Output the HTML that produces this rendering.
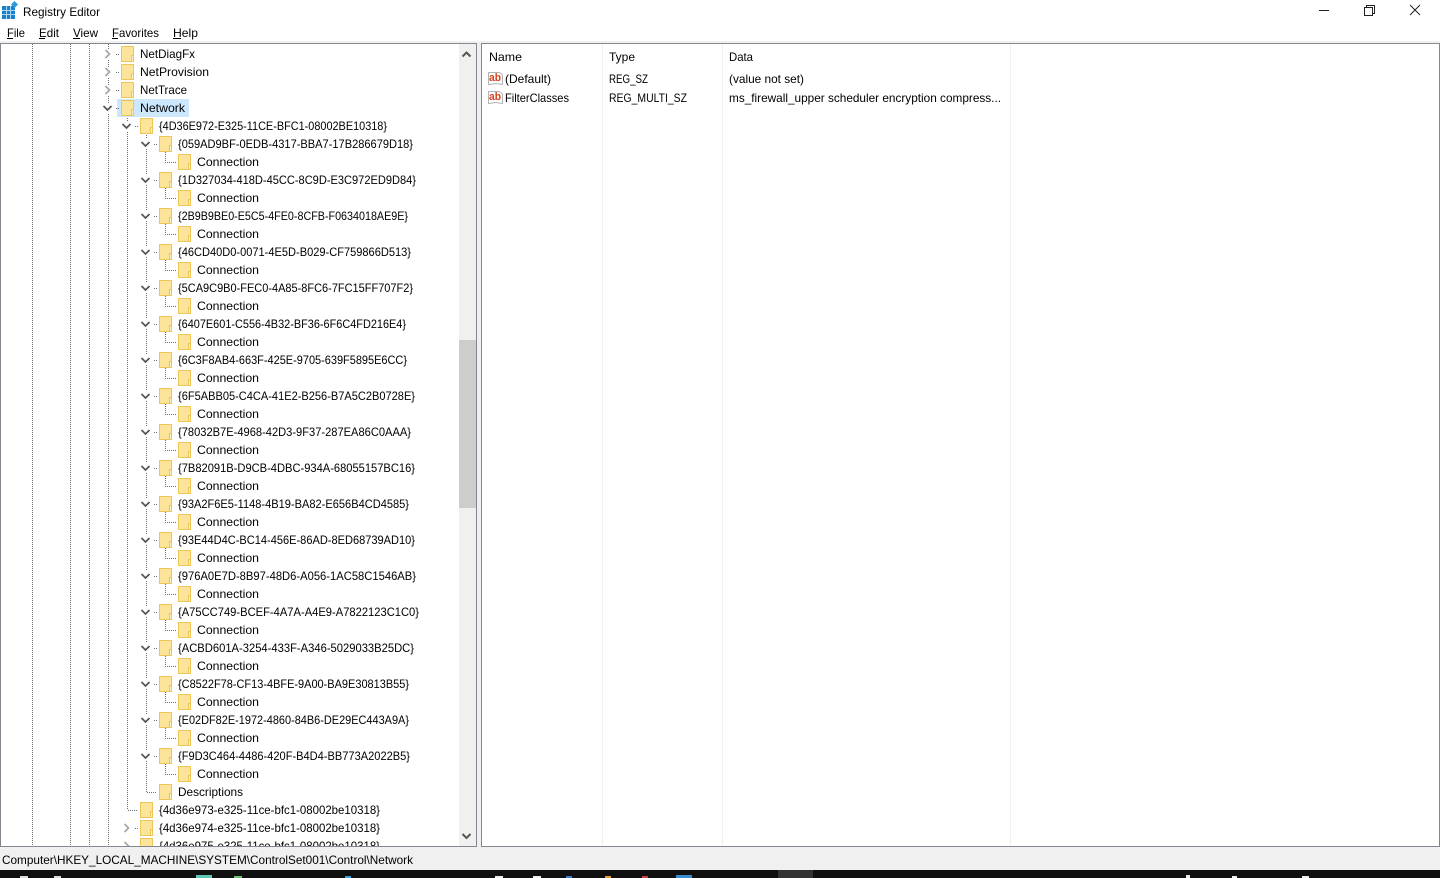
<!DOCTYPE html>
<html><head><meta charset="utf-8"><title>Registry Editor</title>
<style>
html,body{margin:0;padding:0;background:#fff;overflow:hidden}
svg{display:block}
text{font-family:"Liberation Sans",sans-serif;font-size:12px;fill:#000}
.d{stroke:#6e6e6e;stroke-width:1;stroke-dasharray:1 1;fill:none}
</style></head><body>
<svg xmlns="http://www.w3.org/2000/svg" width="1440" height="878" viewBox="0 0 1440 878">
<defs>
<g id="f"><path d="M.5-7.5H12.5V7.5H.5Z" fill="#fce49a" stroke="#eec558"/><path d="M10.500 1.500V7.500H12.500V1.500Z" fill="#fdf1c4" stroke="#eec558"/></g>
<g id="cd"><rect x="-4.500" y="-5" width="10" height="10" fill="#fff"/><path d="M-3.500-2 .5 2 4.500-2" fill="none" stroke="#555" stroke-width="1.7"/></g>
<g id="cr"><rect x="-4.500" y="-5" width="10" height="10" fill="#fff"/><path d="M-1.500-4 2.500 0-1.500 4" fill="none" stroke="#a6a6a6" stroke-width="1.7"/></g>
<path id="s" d="M0 0H1M2 0H3" stroke="#6e6e6e" fill="none"/>
<clipPath id="tree"><rect x="1" y="44" width="458" height="802"/></clipPath>
</defs>

<rect width="1440" height="878" fill="#fff"/>
<!-- title bar -->
<g>
<path d="M2 6H15V19H2Z" fill="#1a80c8"/>
<path d="M2 10.500H15M2 14.500H15M6.500 6V19M10.500 6V19" stroke="#a8d8f4" stroke-width="1" shape-rendering="crispEdges"/>
<path d="M14.500 1 18 4.500 14.500 8 11 4.500Z" fill="#2a9ad8"/>
</g>
<text x="23" y="16" textLength="77" lengthAdjust="spacingAndGlyphs">Registry Editor</text>
<path d="M1319 10.500H1329" stroke="#222" fill="none" shape-rendering="crispEdges"/>
<path d="M1364.500 7.500H1372.500V15.500H1364.500ZM1366.500 7.500V5.500H1374.500V13.500H1372.500" stroke="#222" fill="none" shape-rendering="crispEdges"/>
<path d="M1410 5 1420 15M1420 5 1410 15" stroke="#222" fill="none"/>
<!-- menu -->
<text x="7" y="37" textLength="18" lengthAdjust="spacingAndGlyphs">File</text>
<text x="39" y="37" textLength="20" lengthAdjust="spacingAndGlyphs">Edit</text>
<text x="73" y="37" textLength="25" lengthAdjust="spacingAndGlyphs">View</text>
<text x="112" y="37" textLength="47" lengthAdjust="spacingAndGlyphs">Favorites</text>
<text x="173" y="37" textLength="25" lengthAdjust="spacingAndGlyphs">Help</text>
<path d="M7 38.500H13M39 38.500H45M73 38.500H80M112 38.500H118M173 38.500H181" stroke="#000" shape-rendering="crispEdges"/>
<rect x="0" y="41" width="1440" height="2" fill="#f0f0f0"/>

<!-- panes frame -->
<rect x="477" y="43" width="4" height="805" fill="#f0f0f0"/>
<rect x="0" y="847" width="1440" height="23" fill="#f0f0f0"/>
<rect x="0" y="870" width="1440" height="8" fill="#101010"/>
<rect x=".5" y="43.500" width="476" height="803" fill="none" stroke="#828790" shape-rendering="crispEdges"/>
<rect x="481.500" y="43.500" width="958" height="803" fill="none" stroke="#828790" shape-rendering="crispEdges"/>

<!-- tree -->
<g clip-path="url(#tree)">
<path class="d" d="M32.500 44V846M70.500 44V846M89.500 44V846M108.500 44V846M127.500 116V810M146.500 135V792"/>
<path class="d" d="M128 810.500H138M147 792.500H157"/>
<rect x="117" y="99" width="72" height="18" fill="#cce8ff"/>

<use href="#cr" x="107" y="54"/><use href="#s" x="116" y="54.500"/><use href="#f" x="121" y="54"/><text x="140" y="58" textLength="55" lengthAdjust="spacingAndGlyphs">NetDiagFx</text>
<use href="#cr" x="107" y="72"/><use href="#s" x="116" y="72.500"/><use href="#f" x="121" y="72"/><text x="140" y="76" textLength="69" lengthAdjust="spacingAndGlyphs">NetProvision</text>
<use href="#cr" x="107" y="90"/><use href="#s" x="116" y="90.500"/><use href="#f" x="121" y="90"/><text x="140" y="94" textLength="47" lengthAdjust="spacingAndGlyphs">NetTrace</text>
<use href="#cd" x="107" y="108"/><use href="#s" x="116" y="108.500"/><use href="#f" x="121" y="108"/><text x="140" y="112" textLength="45" lengthAdjust="spacingAndGlyphs">Network</text>
<use href="#cd" x="126" y="126"/><use href="#s" x="135" y="126.500"/><use href="#f" x="140" y="126"/><text x="159" y="130" textLength="228" lengthAdjust="spacingAndGlyphs">{4D36E972-E325-11CE-BFC1-08002BE10318}</text>

<g transform="translate(0,144)"><use href="#cd" x="145"/><use href="#s" x="154" y=".5"/><use href="#f" x="159"/><text x="178" y="4" textLength="235" lengthAdjust="spacingAndGlyphs">{059AD9BF-0EDB-4317-BBA7-17B286679D18}</text><path class="d" d="M165.500 8V18.500H176"/><use href="#f" x="178" y="18"/><text x="197" y="22" textLength="62" lengthAdjust="spacingAndGlyphs">Connection</text></g>
<g transform="translate(0,180)"><use href="#cd" x="145"/><use href="#s" x="154" y=".5"/><use href="#f" x="159"/><text x="178" y="4" textLength="238" lengthAdjust="spacingAndGlyphs">{1D327034-418D-45CC-8C9D-E3C972ED9D84}</text><path class="d" d="M165.500 8V18.500H176"/><use href="#f" x="178" y="18"/><text x="197" y="22" textLength="62" lengthAdjust="spacingAndGlyphs">Connection</text></g>
<g transform="translate(0,216)"><use href="#cd" x="145"/><use href="#s" x="154" y=".5"/><use href="#f" x="159"/><text x="178" y="4" textLength="230" lengthAdjust="spacingAndGlyphs">{2B9B9BE0-E5C5-4FE0-8CFB-F0634018AE9E}</text><path class="d" d="M165.500 8V18.500H176"/><use href="#f" x="178" y="18"/><text x="197" y="22" textLength="62" lengthAdjust="spacingAndGlyphs">Connection</text></g>
<g transform="translate(0,252)"><use href="#cd" x="145"/><use href="#s" x="154" y=".5"/><use href="#f" x="159"/><text x="178" y="4" textLength="233" lengthAdjust="spacingAndGlyphs">{46CD40D0-0071-4E5D-B029-CF759866D513}</text><path class="d" d="M165.500 8V18.500H176"/><use href="#f" x="178" y="18"/><text x="197" y="22" textLength="62" lengthAdjust="spacingAndGlyphs">Connection</text></g>
<g transform="translate(0,288)"><use href="#cd" x="145"/><use href="#s" x="154" y=".5"/><use href="#f" x="159"/><text x="178" y="4" textLength="235" lengthAdjust="spacingAndGlyphs">{5CA9C9B0-FEC0-4A85-8FC6-7FC15FF707F2}</text><path class="d" d="M165.500 8V18.500H176"/><use href="#f" x="178" y="18"/><text x="197" y="22" textLength="62" lengthAdjust="spacingAndGlyphs">Connection</text></g>
<g transform="translate(0,324)"><use href="#cd" x="145"/><use href="#s" x="154" y=".5"/><use href="#f" x="159"/><text x="178" y="4" textLength="228" lengthAdjust="spacingAndGlyphs">{6407E601-C556-4B32-BF36-6F6C4FD216E4}</text><path class="d" d="M165.500 8V18.500H176"/><use href="#f" x="178" y="18"/><text x="197" y="22" textLength="62" lengthAdjust="spacingAndGlyphs">Connection</text></g>
<g transform="translate(0,360)"><use href="#cd" x="145"/><use href="#s" x="154" y=".5"/><use href="#f" x="159"/><text x="178" y="4" textLength="229" lengthAdjust="spacingAndGlyphs">{6C3F8AB4-663F-425E-9705-639F5895E6CC}</text><path class="d" d="M165.500 8V18.500H176"/><use href="#f" x="178" y="18"/><text x="197" y="22" textLength="62" lengthAdjust="spacingAndGlyphs">Connection</text></g>
<g transform="translate(0,396)"><use href="#cd" x="145"/><use href="#s" x="154" y=".5"/><use href="#f" x="159"/><text x="178" y="4" textLength="237" lengthAdjust="spacingAndGlyphs">{6F5ABB05-C4CA-41E2-B256-B7A5C2B0728E}</text><path class="d" d="M165.500 8V18.500H176"/><use href="#f" x="178" y="18"/><text x="197" y="22" textLength="62" lengthAdjust="spacingAndGlyphs">Connection</text></g>
<g transform="translate(0,432)"><use href="#cd" x="145"/><use href="#s" x="154" y=".5"/><use href="#f" x="159"/><text x="178" y="4" textLength="233" lengthAdjust="spacingAndGlyphs">{78032B7E-4968-42D3-9F37-287EA86C0AAA}</text><path class="d" d="M165.500 8V18.500H176"/><use href="#f" x="178" y="18"/><text x="197" y="22" textLength="62" lengthAdjust="spacingAndGlyphs">Connection</text></g>
<g transform="translate(0,468)"><use href="#cd" x="145"/><use href="#s" x="154" y=".5"/><use href="#f" x="159"/><text x="178" y="4" textLength="237" lengthAdjust="spacingAndGlyphs">{7B82091B-D9CB-4DBC-934A-68055157BC16}</text><path class="d" d="M165.500 8V18.500H176"/><use href="#f" x="178" y="18"/><text x="197" y="22" textLength="62" lengthAdjust="spacingAndGlyphs">Connection</text></g>
<g transform="translate(0,504)"><use href="#cd" x="145"/><use href="#s" x="154" y=".5"/><use href="#f" x="159"/><text x="178" y="4" textLength="231" lengthAdjust="spacingAndGlyphs">{93A2F6E5-1148-4B19-BA82-E656B4CD4585}</text><path class="d" d="M165.500 8V18.500H176"/><use href="#f" x="178" y="18"/><text x="197" y="22" textLength="62" lengthAdjust="spacingAndGlyphs">Connection</text></g>
<g transform="translate(0,540)"><use href="#cd" x="145"/><use href="#s" x="154" y=".5"/><use href="#f" x="159"/><text x="178" y="4" textLength="237" lengthAdjust="spacingAndGlyphs">{93E44D4C-BC14-456E-86AD-8ED68739AD10}</text><path class="d" d="M165.500 8V18.500H176"/><use href="#f" x="178" y="18"/><text x="197" y="22" textLength="62" lengthAdjust="spacingAndGlyphs">Connection</text></g>
<g transform="translate(0,576)"><use href="#cd" x="145"/><use href="#s" x="154" y=".5"/><use href="#f" x="159"/><text x="178" y="4" textLength="238" lengthAdjust="spacingAndGlyphs">{976A0E7D-8B97-48D6-A056-1AC58C1546AB}</text><path class="d" d="M165.500 8V18.500H176"/><use href="#f" x="178" y="18"/><text x="197" y="22" textLength="62" lengthAdjust="spacingAndGlyphs">Connection</text></g>
<g transform="translate(0,612)"><use href="#cd" x="145"/><use href="#s" x="154" y=".5"/><use href="#f" x="159"/><text x="178" y="4" textLength="241" lengthAdjust="spacingAndGlyphs">{A75CC749-BCEF-4A7A-A4E9-A7822123C1C0}</text><path class="d" d="M165.500 8V18.500H176"/><use href="#f" x="178" y="18"/><text x="197" y="22" textLength="62" lengthAdjust="spacingAndGlyphs">Connection</text></g>
<g transform="translate(0,648)"><use href="#cd" x="145"/><use href="#s" x="154" y=".5"/><use href="#f" x="159"/><text x="178" y="4" textLength="236" lengthAdjust="spacingAndGlyphs">{ACBD601A-3254-433F-A346-5029033B25DC}</text><path class="d" d="M165.500 8V18.500H176"/><use href="#f" x="178" y="18"/><text x="197" y="22" textLength="62" lengthAdjust="spacingAndGlyphs">Connection</text></g>
<g transform="translate(0,684)"><use href="#cd" x="145"/><use href="#s" x="154" y=".5"/><use href="#f" x="159"/><text x="178" y="4" textLength="231" lengthAdjust="spacingAndGlyphs">{C8522F78-CF13-4BFE-9A00-BA9E30813B55}</text><path class="d" d="M165.500 8V18.500H176"/><use href="#f" x="178" y="18"/><text x="197" y="22" textLength="62" lengthAdjust="spacingAndGlyphs">Connection</text></g>
<g transform="translate(0,720)"><use href="#cd" x="145"/><use href="#s" x="154" y=".5"/><use href="#f" x="159"/><text x="178" y="4" textLength="231" lengthAdjust="spacingAndGlyphs">{E02DF82E-1972-4860-84B6-DE29EC443A9A}</text><path class="d" d="M165.500 8V18.500H176"/><use href="#f" x="178" y="18"/><text x="197" y="22" textLength="62" lengthAdjust="spacingAndGlyphs">Connection</text></g>
<g transform="translate(0,756)"><use href="#cd" x="145"/><use href="#s" x="154" y=".5"/><use href="#f" x="159"/><text x="178" y="4" textLength="232" lengthAdjust="spacingAndGlyphs">{F9D3C464-4486-420F-B4D4-BB773A2022B5}</text><path class="d" d="M165.500 8V18.500H176"/><use href="#f" x="178" y="18"/><text x="197" y="22" textLength="62" lengthAdjust="spacingAndGlyphs">Connection</text></g>

<use href="#f" x="159" y="792"/><text x="178" y="796" textLength="65" lengthAdjust="spacingAndGlyphs">Descriptions</text>
<use href="#f" x="140" y="810"/><text x="159" y="814" textLength="221" lengthAdjust="spacingAndGlyphs">{4d36e973-e325-11ce-bfc1-08002be10318}</text>
<use href="#cr" x="126" y="828"/><use href="#s" x="135" y="828.500"/><use href="#f" x="140" y="828"/><text x="159" y="832" textLength="221" lengthAdjust="spacingAndGlyphs">{4d36e974-e325-11ce-bfc1-08002be10318}</text>
<use href="#cr" x="126" y="846"/><use href="#s" x="135" y="846.500"/><use href="#f" x="140" y="846"/><text x="159" y="850" textLength="221" lengthAdjust="spacingAndGlyphs">{4d36e975-e325-11ce-bfc1-08002be10318}</text>
</g>

<!-- scrollbar -->
<rect x="459" y="44" width="17" height="802" fill="#f0f0f0"/>
<rect x="459" y="340" width="17" height="168" fill="#cdcdcd"/>
<path d="M462.500 56.500 466.500 52.500 470.500 56.500" fill="none" stroke="#555" stroke-width="2"/>
<path d="M462.500 834 466.500 838 470.500 834" fill="none" stroke="#555" stroke-width="2"/>

<!-- list view -->
<path d="M602.500 44V846M722.500 44V846M1010.500 44V846" stroke="#f0f0f0" shape-rendering="crispEdges"/>
<text x="489" y="61" textLength="33" lengthAdjust="spacingAndGlyphs">Name</text>
<text x="609" y="61" textLength="26" lengthAdjust="spacingAndGlyphs">Type</text>
<text x="729" y="61" textLength="24" lengthAdjust="spacingAndGlyphs">Data</text>

<g>
<path d="M488.500 72.500H499.500L502.500 75V84.500L496 83.500 488.500 84.500Z" fill="#fff" stroke="#b4b4b4"/>
<text x="489" y="81" style="font-size:11px;font-weight:bold;fill:#d8401c" textLength="12" lengthAdjust="spacingAndGlyphs">ab</text>
</g>
<g transform="translate(0,19)">
<path d="M488.500 72.500H499.500L502.500 75V84.500L496 83.500 488.500 84.500Z" fill="#fff" stroke="#b4b4b4"/>
<text x="489" y="81" style="font-size:11px;font-weight:bold;fill:#d8401c" textLength="12" lengthAdjust="spacingAndGlyphs">ab</text>
</g>
<text x="505" y="83" textLength="46" lengthAdjust="spacingAndGlyphs">(Default)</text>
<text x="505" y="102" textLength="64" lengthAdjust="spacingAndGlyphs">FilterClasses</text>
<text x="609" y="83" textLength="39" lengthAdjust="spacingAndGlyphs">REG_SZ</text>
<text x="609" y="102" textLength="78" lengthAdjust="spacingAndGlyphs">REG_MULTI_SZ</text>
<text x="729" y="83" textLength="75" lengthAdjust="spacingAndGlyphs">(value not set)</text>
<text x="729" y="102" textLength="272" lengthAdjust="spacingAndGlyphs">ms_firewall_upper scheduler encryption compress...</text>

<!-- status bar -->
<text x="2" y="864" textLength="411" lengthAdjust="spacingAndGlyphs">Computer\HKEY_LOCAL_MACHINE\SYSTEM\ControlSet001\Control\Network</text>

<!-- taskbar fragments -->
<rect x="778" y="870" width="35" height="8" fill="#333"/>
<rect x="20" y="876" width="8" height="2" fill="#ddd"/>
<rect x="54" y="876" width="7" height="2" fill="#ddd"/>
<rect x="196" y="875" width="16" height="3" fill="#5cc8b8"/>
<rect x="234" y="876" width="8" height="2" fill="#6cc06c"/>
<rect x="345" y="876" width="6" height="2" fill="#3aa0d8"/>
<rect x="495" y="876" width="8" height="2" fill="#eee"/>
<rect x="533" y="876" width="8" height="2" fill="#eee"/>
<rect x="566" y="876" width="6" height="2" fill="#3a7cc8"/>
<rect x="605" y="876" width="6" height="2" fill="#e9a030"/>
<rect x="642" y="876" width="6" height="2" fill="#c84040"/>
<rect x="676" y="875" width="16" height="3" fill="#3a8cd0"/>
<rect x="1186" y="875" width="4" height="3" fill="#eee"/>
<rect x="1232" y="876" width="5" height="2" fill="#eee"/>
<rect x="1302" y="876" width="7" height="2" fill="#eee"/>
</svg>
</body></html>
